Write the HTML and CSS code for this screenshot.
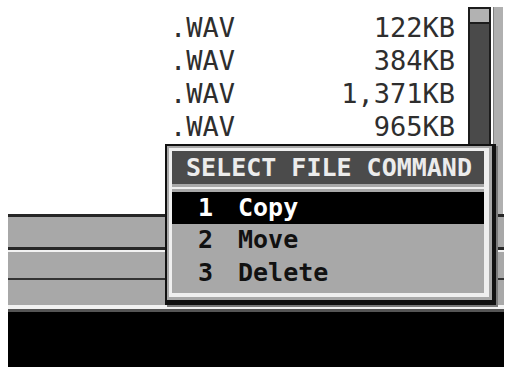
FILE: index.html
```html
<!DOCTYPE html>
<html>
<head>
<meta charset="utf-8">
<link rel="stylesheet" href="styles.css">
</head>
<body>
<div class="screen">
  <div class="top">
    <div class="list">
      <div class="row"><span>.WAV</span><span>122KB</span></div>
      <div class="row"><span>.WAV</span><span>384KB</span></div>
      <div class="row"><span>.WAV</span><span>1,371KB</span></div>
      <div class="row"><span>.WAV</span><span>965KB</span></div>
    </div>
    <div class="scroll"><div class="thumb"></div></div>
    <div class="rail"></div>
  </div>
  <div class="panel">
    <div class="prow p1"></div>
    <div class="prow p2"></div>
    <div class="prow p3"></div>
  </div>
  <div class="footer"></div>

  <div class="popup">
    <div class="inner">
      <div class="title">SELECT FILE COMMAND</div>
      <div class="sep"></div>
      <div class="item selected"><span class="num">1</span><span class="name">Copy</span></div>
      <div class="item"><span class="num">2</span><span class="name">Move</span></div>
      <div class="item last"><span class="num">3</span><span class="name">Delete</span></div>
    </div>
  </div>
</div>
</body>
</html>
```

FILE: styles.css
```css
* { box-sizing: border-box; }
html, body { margin: 0; padding: 0; background: #fff; overflow: hidden; }

.screen {
  position: relative;
  margin-left: 8px;
  width: 496px;
  height: 367px;
}

.top {
  display: flex;
  height: 214px;
}

.list {
  flex: 1;
  padding: 11px 13px 0 162px;
  font-family: "DejaVu Sans Mono", monospace;
  font-size: 27px;
  line-height: 33px;
  color: #2e2e2e;
}

.row {
  display: flex;
  justify-content: space-between;
}

.scroll {
  width: 23px;
  margin-top: 7px;
  border: 2px solid #1c1c1c;
  border-bottom: none;
  background: #4a4a4a;
}

.thumb {
  height: 15px;
  background: #b2b2b2;
  border-bottom: 2px solid #1c1c1c;
}

.rail {
  width: 10px;
  margin: 7px 1px 0 2px;
  background: #b0b0b0;
  border-left: 1px solid #808080;
}

.panel {
  height: 98px;
  background: #a8a8a8;
}

.prow { background: #a8a8a8; }
.p1 { height: 33px; border-top: 3px solid #262626; }
.p2 { height: 31px; border-top: 3px solid #262626; box-shadow: inset 0 2px 0 #f2f2f2; }
.p3 { height: 34px; border-top: 2px solid #333; border-bottom: 3px solid #555; box-shadow: inset 0 -4px 0 #f2f2f2; }

.footer {
  height: 55px;
  background: #000;
}

.popup {
  position: absolute;
  left: 157px;
  top: 144px;
  width: 331px;
  background: #a8a8a8;
  border: 2px solid #111;
  border-right-width: 4px;
  border-bottom-width: 5px;
  padding: 2px 3px 3px 2px;
  box-shadow: 2px 2px 0 #7a7a7a;
  font-family: "DejaVu Sans Mono", monospace;
  font-weight: bold;
  font-size: 25px;
}

.inner {
  border: 3px solid #efefef;
  border-right-width: 5px;
  border-bottom-width: 4px;
  padding-bottom: 3px;
}

.title {
  height: 33px;
  line-height: 33px;
  background: #4b4b4b;
  color: #ececec;
  padding-left: 14px;
  white-space: nowrap;
}

.sep {
  height: 2px;
  margin: 3px 0;
  background: #efefef;
}

.item {
  display: flex;
  height: 33px;
  line-height: 32px;
  padding-left: 26px;
  color: #111;
}

.item.selected {
  height: 32px;
  background: #000;
  color: #fff;
}

.num { width: 15px; }
.name { margin-left: 25px; }
```
